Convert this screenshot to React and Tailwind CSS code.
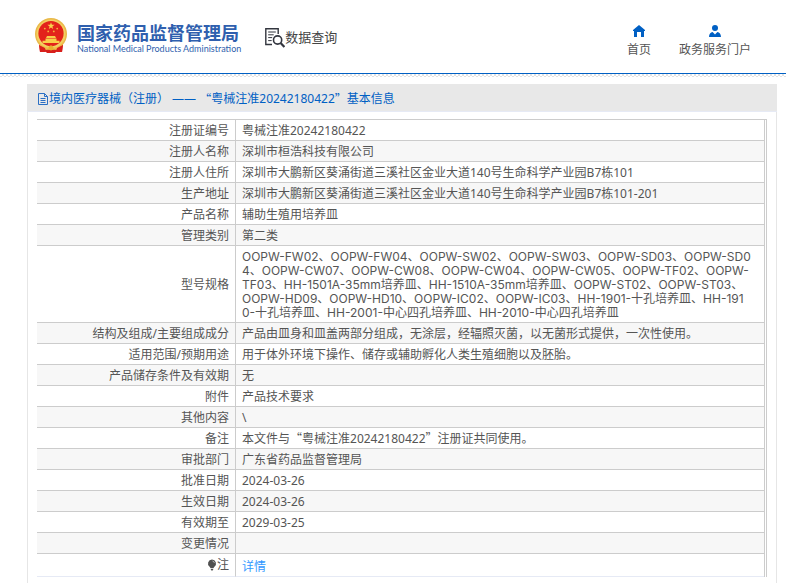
const ROWS = [
  { label: '注册证编号', value: '粤械注准20242180422' },
  { label: '注册人名称', value: '深圳市桓浩科技有限公司' },
  { label: '注册人住所', value: '深圳市大鹏新区葵涌街道三溪社区金业大道140号生命科学产业园B7栋101' },
  { label: '生产地址', value: '深圳市大鹏新区葵涌街道三溪社区金业大道140号生命科学产业园B7栋101-201' },
  { label: '产品名称', value: '辅助生殖用培养皿' },
  { label: '管理类别', value: '第二类' },
  {
    label: '型号规格',
    lines: [
      'OOPW-FW02、OOPW-FW04、OOPW-SW02、OOPW-SW03、OOPW-SD03、OOPW-SD0',
      '4、OOPW-CW07、OOPW-CW08、OOPW-CW04、OOPW-CW05、OOPW-TF02、OOPW-',
      'TF03、HH-1501A-35mm培养皿、HH-1510A-35mm培养皿、OOPW-ST02、OOPW-ST03、',
      'OOPW-HD09、OOPW-HD10、OOPW-IC02、OOPW-IC03、HH-1901-十孔培养皿、HH-191',
      '0-十孔培养皿、HH-2001-中心四孔培养皿、HH-2010-中心四孔培养皿',
    ],
  },
  { label: '结构及组成/主要组成成分', value: '产品由皿身和皿盖两部分组成，无涂层，经辐照灭菌，以无菌形式提供，一次性使用。' },
  { label: '适用范围/预期用途', value: '用于体外环境下操作、储存或辅助孵化人类生殖细胞以及胚胎。' },
  { label: '产品储存条件及有效期', value: '无' },
  { label: '附件', value: '产品技术要求' },
  { label: '其他内容', value: '\\' },
  { label: '备注', value: <>本文件与<Quoted>粤械注准20242180422</Quoted>注册证共同使用。</> },
  { label: '审批部门', value: '广东省药品监督管理局' },
  { label: '批准日期', value: '2024-03-26' },
  { label: '生效日期', value: '2024-03-26' },
  { label: '有效期至', value: '2029-03-25' },
  { label: '变更情况', value: '' },
]

// Full-width Chinese quotation marks around Latin digits
function Quoted({ children }) {
  return (
    <>
      <span className="leading-none font-['Noto_Sans_CJK_SC',sans-serif]">“</span>
      {children}
      <span className="leading-none font-['Noto_Sans_CJK_SC',sans-serif]">”</span>
    </>
  )
}

function Emblem() {
  return (
    <svg viewBox="0 0 32 35" className="w-8 h-[35px] shrink-0" aria-hidden="true">
      <path d="M4 25h24l-1 9-5-1-2 2h-8l-2-2-5 1z" fill="#d8201c" />
      <circle cx="16" cy="16" r="16" fill="#e9b949" />
      <circle cx="16" cy="16" r="14.5" fill="#f3cf62" />
      <circle cx="16" cy="15.5" r="12.6" fill="#e3231b" />
      <path d="M16 4.2l.9 2.6h2.7l-2.2 1.6.8 2.6-2.2-1.6-2.2 1.6.8-2.6-2.2-1.6h2.7z" fill="#f8d34c" />
      <g fill="#f3b53c">
        <circle cx="9.8" cy="10.6" r="0.9" />
        <circle cx="22.2" cy="10.6" r="0.9" />
        <circle cx="13.2" cy="13.4" r="0.9" />
        <circle cx="18.8" cy="13.4" r="0.9" />
      </g>
      <path d="M12 18h8l1 2h-10zM10.5 20.5h11v2.2h3v2.3h-17v-2.3h3z" fill="#f8cf4a" />
      <path d="M4 24c3 5 7 5.500 9 5.500l3-2 3 2c2 0 6-.5 9-5.500l-1 5-6 3-5-2-5 2-6-3z" fill="#f0bd45" />
      <circle cx="16" cy="30" r="2.4" fill="#e9b02e" />
      <path d="M4 27l6 3 1 4H5zM28 27l-6 3-1 4h6z" fill="#d8201c" />
    </svg>
  )
}

function DataSearchIcon() {
  return (
    <svg viewBox="0 0 20 20" className="w-5 h-5 shrink-0" fill="none" stroke="#33363f" aria-hidden="true">
      <path d="M7 16.5H.8V.8h12.4V6" strokeWidth="1.4" />
      <path d="M3.2 4h7.6M3.2 6.8h5.5M3.2 9.6h4M3.2 12.6h3.5" strokeWidth="1" />
      <circle cx="12.6" cy="12" r="4.1" strokeWidth="1.6" />
      <path d="M15.6 15l3.8 4" strokeWidth="2.2" />
    </svg>
  )
}

function HomeIcon() {
  return (
    <svg viewBox="0 0 12 12" className="w-3 h-3" aria-hidden="true">
      <path d="M6 0l6 5v1h-1v6H8V7H4v5H1V6H0V5z" fill="#0060c4" />
    </svg>
  )
}

function UserIcon() {
  return (
    <svg viewBox="0 0 12 12" className="w-3 h-3" aria-hidden="true">
      <circle cx="6" cy="3" r="3" fill="#0060c4" />
      <path d="M0 12c0-3 1.500-4.700 3.600-5L6 9.500 8.400 7C10.500 7.300 12 9 12 12z" fill="#0060c4" />
    </svg>
  )
}

function FileIcon() {
  return (
    <svg viewBox="0 0 11 12" className="w-[11px] h-3 shrink-0" fill="none" stroke="#2b6fc4" aria-hidden="true">
      <path d="M.5.5h6l3 3v8h-9zM6.500.5v3h3M2.500 5.500h5M2.500 7.500h5M2.500 9.500h5" />
    </svg>
  )
}

function BulbIcon() {
  return (
    <svg viewBox="0 0 10 12" className="inline-block w-[10px] h-3 align-[-2px]" aria-hidden="true">
      <path d="M5 .5a4 4 0 0 1 2.400 7.200L6.500 9h-3l-.9-1.300A4 4 0 0 1 5 .5zM3.500 9.700h3L5.700 11.500H4.300z" fill="#505050" />
      <path d="M5.500 2c1 .2 1.700.9 1.900 1.900" stroke="#ddd" strokeWidth=".7" fill="none" />
    </svg>
  )
}

export default function App() {
  return (
    <div className="bg-white text-xs text-[#555] font-['Noto_Sans','Noto_Sans_CJK_SC',sans-serif]">
      <header className="flex items-start justify-between h-[74px] pl-[35px] pr-[35px] border-b border-[#0060c4]">
        <div className="flex items-start">
          <a href="#" className="flex items-start gap-[10px] pt-[18px]">
            <Emblem />
            <div className="pt-[4px] text-[#2f5fae] whitespace-nowrap">
              <h1 className="text-[18px] leading-[20px] font-bold font-['Noto_Sans_CJK_SC',sans-serif]">国家药品监督管理局</h1>
              <p className="text-[9px] leading-[14px] font-['Lato',sans-serif]">National Medical Products Administration</p>
            </div>
          </a>
          <div className="flex items-start ml-[24px] pt-[28px]">
            <DataSearchIcon />
            <h2 className="text-[13px] leading-[18px] text-[#444] font-['Noto_Sans_CJK_SC',sans-serif]">数据查询</h2>
          </div>
        </div>
        <nav className="flex gap-[28px] pt-[25px]">
          <a href="#" className="flex flex-col items-center gap-[5px] leading-[16px]">
            <HomeIcon />
            首页
          </a>
          <a href="#" className="flex flex-col items-center gap-[5px] leading-[16px]">
            <UserIcon />
            政务服务门户
          </a>
        </nav>
      </header>
      {/* Dotted strip under the header */}
      <div className="h-[3px] bg-[repeating-conic-gradient(#e2e2e2_0_25%,#ffffff_0_50%)] bg-size-[4px_4px]" />

      <main className="mt-[7px] ml-[27px] mr-[9px] border-x border-[#e6e6e6]">
        <h3 className="-mx-px flex items-center h-7 pt-[2px] pl-[11px] bg-[#e8e8e8] border-b border-[#e6eaf5] text-[#0060c4] whitespace-pre">
          <FileIcon />
          境内医疗器械（注册） —— <Quoted>粤械注准20242180422</Quoted>基本信息
        </h3>
        <div className="pt-[7px] pl-[9px] pr-[9px] pb-2">
          <div className="border-t border-r border-[#ccc] pr-px">
            <table className="w-full table-fixed border-separate border-spacing-0 border-r border-[#ccc] leading-[14px]">
              <colgroup>
                <col className="w-[199px]" />
                <col />
              </colgroup>
              <tbody>
                {ROWS.map((row) => (
                  <tr key={row.label} className="even:bg-[#f7f7f7]">
                    <th scope="row" className="pt-[4px] pb-[2px] pr-[6px] font-normal text-right border-b border-r border-[#ccc]">
                      {row.label}
                    </th>
                    <td className="pt-[4px] pb-[2px] pl-[6px] border-b border-[#ccc] whitespace-nowrap">
                      {row.lines ? (
                        <div className="font-['Inter','Noto_Sans_CJK_SC',sans-serif]">
                          {row.lines.map((line) => <span key={line} className="block">{line}</span>)}
                        </div>
                      ) : row.value}
                    </td>
                  </tr>
                ))}
                <tr>
                  <th scope="row" className="pt-[4px] pb-[4px] pr-[6px] font-normal text-right border-b border-r border-b-[#e6eaf5] border-r-[#ccc]">
                    <BulbIcon />
                    注
                  </th>
                  <td className="pt-[6px] pb-[2px] pl-[6px] border-b border-[#e6eaf5]">
                    <a href="#" className="text-[#3399ff]">详情</a>
                  </td>
                </tr>
              </tbody>
            </table>
          </div>
        </div>
      </main>
    </div>
  )
}
